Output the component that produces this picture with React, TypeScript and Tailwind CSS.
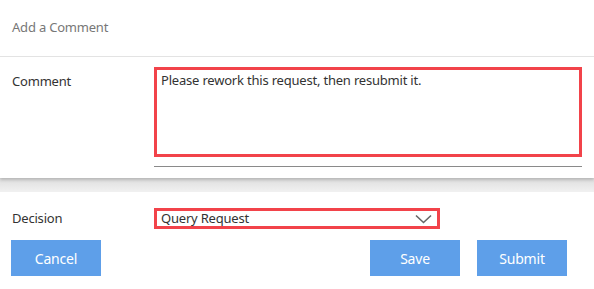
import React from 'react';

const font = { fontFamily: '"Segoe UI", "Noto Sans", "Open Sans", sans-serif' };

const App: React.FC = () => {
  return (
    <div className="w-[594px] h-[289px] bg-white overflow-hidden text-[#333] tracking-[-0.2px]" style={font}>
      {/* comment card */}
      <div className="h-[178px] bg-white shadow-[0_2px_3px_rgba(0,0,0,0.18)] relative z-10">
        <div className="h-[57px] border-b border-[#e3e3e3] flex items-center px-[12px]">
          <span className="text-[13px] text-[#777]">Add a Comment</span>
        </div>
        <div className="flex pt-[10px]">
          <div className="w-[154px] pl-[12px] pt-[5px] text-[13px]">Comment</div>
          <div className="w-[428px]">
            <div className="h-[90px] border-[3px] border-[#f2434a] px-[4px] pt-[1px] text-[13px] text-[#333]">
              Please rework this request, then resubmit it.
            </div>
            <div className="mt-[9px] h-px bg-[#8a8a8a]" />
          </div>
        </div>
      </div>

      {/* divider band */}
      <div className="h-[14px] bg-gradient-to-b from-[#dedede] to-[#f1f1f1]" />

      {/* decision area */}
      <div className="bg-white">
        <div className="flex items-center pt-[16px]">
          <div className="w-[154px] pl-[12px] text-[13px]">Decision</div>
          <div className="w-[286px] h-[21px] border-[3px] border-[#f2434a] flex items-center justify-between pl-[4px] pr-[5px]">
            <span className="text-[13px] leading-none">Query Request</span>
            <svg width="17" height="10" viewBox="0 0 17 10" fill="none">
              <path d="M1 1.5 L8.5 8.5 L16 1.5" stroke="#666" strokeWidth="1.6" />
            </svg>
          </div>
        </div>
        <div className="flex mt-[11px] pl-[11px] pr-[27px]">
          <button className="w-[90px] h-[36px] bg-[#5e9fe9] text-white text-[14px]">Cancel</button>
          <div className="flex-1" />
          <button className="w-[90px] h-[36px] bg-[#5e9fe9] text-white text-[14px]">Save</button>
          <button className="w-[90px] h-[36px] bg-[#5e9fe9] text-white text-[14px] ml-[17px]">Submit</button>
        </div>
      </div>
    </div>
  );
};

export default App;
